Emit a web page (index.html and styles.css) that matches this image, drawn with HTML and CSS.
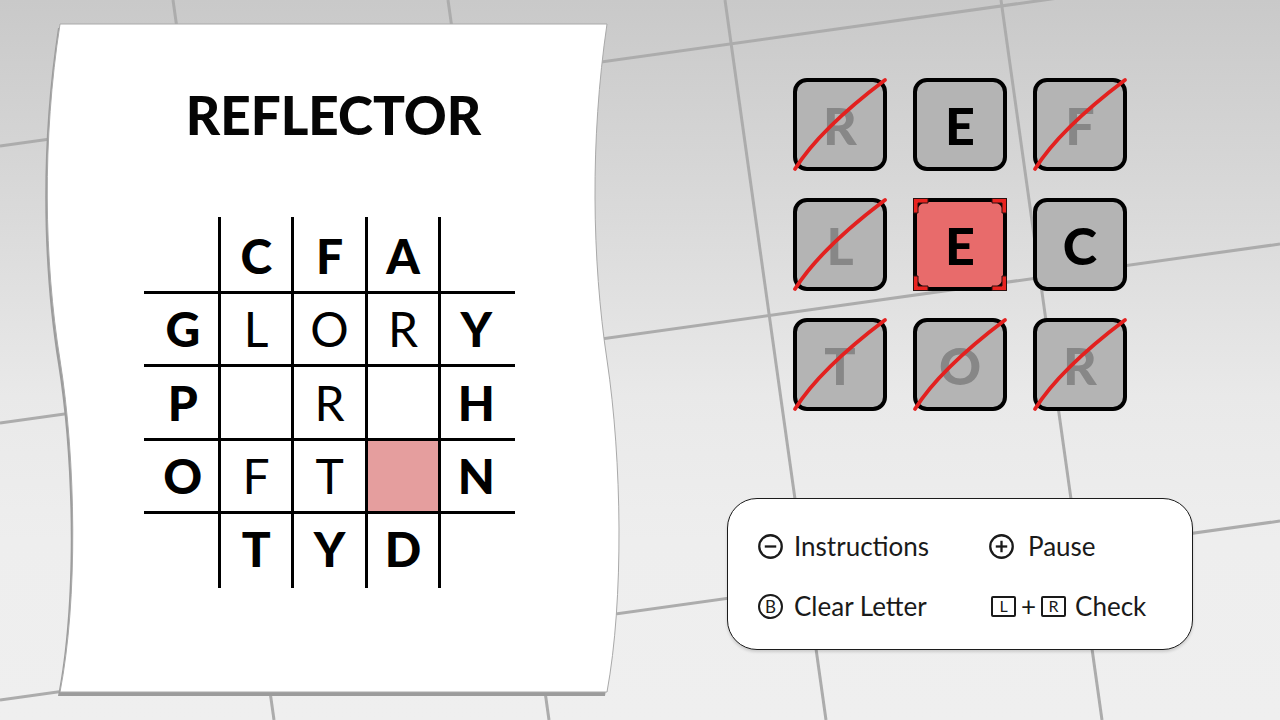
FILE: index.html
```html
<!DOCTYPE html>
<html lang="en">
<head>
<meta charset="utf-8">
<title>Reflector</title>
<link rel="stylesheet" href="styles.css">
</head>
<body>
<div class="scene">
  <svg class="floor" width="1280" height="720" viewBox="0 0 1280 720" aria-hidden="true">
    <g stroke="#acacac" stroke-width="3" fill="none">
      <line x1="0" y1="146" x2="1280" y2="-33"/>
      <line x1="0" y1="423" x2="1280" y2="244"/>
      <line x1="0" y1="700" x2="1280" y2="521"/>
      <line x1="173" y1="0" x2="274" y2="720"/>
      <line x1="448" y1="0" x2="549" y2="720"/>
      <line x1="725" y1="0" x2="826" y2="720"/>
      <line x1="1001" y1="0" x2="1102" y2="720"/>
    </g>
  </svg>

  <section class="paper-side">
    <div class="paper">
      <svg class="paper-shape" width="640" height="720" viewBox="0 0 640 720" aria-hidden="true">
        <path transform="translate(-2,4)" fill="#9c9c9c" d="M60,24 C42,140 44,260 60,360 C76,460 78,600 60,692 L607,692 C624,600 622,460 607,360 C592,260 590,140 607,24 Z"/>
        <path fill="#ffffff" stroke="#a9a9a9" stroke-width="1" d="M60,24 C42,140 44,260 60,360 C76,460 78,600 60,692 L607,692 C624,600 622,460 607,360 C592,260 590,140 607,24 Z"/>
      </svg>
      <h1 class="title">REFLECTOR</h1>
      <div class="puzzle">
        <div class="cell"></div><div class="cell">C</div><div class="cell">F</div><div class="cell">A</div><div class="cell"></div>
        <div class="cell">G</div><div class="cell lt">L</div><div class="cell lt">O</div><div class="cell lt">R</div><div class="cell">Y</div>
        <div class="cell">P</div><div class="cell"></div><div class="cell lt">R</div><div class="cell"></div><div class="cell">H</div>
        <div class="cell">O</div><div class="cell lt">F</div><div class="cell lt">T</div><div class="cell hl"></div><div class="cell">N</div>
        <div class="cell"></div><div class="cell">T</div><div class="cell">Y</div><div class="cell">D</div><div class="cell"></div>
      </div>
    </div>
  </section>

  <section class="play-side">
    <div class="tiles">
      <div class="tile used">R<svg class="strike" viewBox="0 0 94 93"><path d="M2,91 Q27,51 92,2"/></svg></div>
      <div class="tile">E</div>
      <div class="tile used">F<svg class="strike" viewBox="0 0 94 93"><path d="M2,91 Q27,51 92,2"/></svg></div>
      <div class="tile used">L<svg class="strike" viewBox="0 0 94 93"><path d="M2,91 Q27,51 92,2"/></svg></div>
      <div class="tile sel">E<svg class="brackets" viewBox="0 0 94 93">
          <path class="corners" fill-rule="evenodd" d="M0,0H94V93H0Z M14,0H80A14,14 0 0 1 94,14V79A14,14 0 0 1 80,93H14A14,14 0 0 1 0,79V14A14,14 0 0 1 14,0Z"/>
          <path class="br" d="M0.5,0.5H15V5H5V15H0.5Z"/>
          <path class="br" d="M93.5,0.5H79V5H89V15H93.5Z"/>
          <path class="br" d="M0.5,92.5H15V88H5V78H0.5Z"/>
          <path class="br" d="M93.5,92.5H79V88H89V78H93.5Z"/>
        </svg></div>
      <div class="tile">C</div>
      <div class="tile used">T<svg class="strike" viewBox="0 0 94 93"><path d="M2,91 Q27,51 92,2"/></svg></div>
      <div class="tile used">O<svg class="strike" viewBox="0 0 94 93"><path d="M2,91 Q27,51 92,2"/></svg></div>
      <div class="tile used">R<svg class="strike" viewBox="0 0 94 93"><path d="M2,91 Q27,51 92,2"/></svg></div>
    </div>

    <div class="controls">
      <div class="ctl">
        <svg class="ico" viewBox="0 0 24 24"><circle cx="12" cy="12" r="10.8"/><line x1="6.5" y1="12" x2="17.5" y2="12"/></svg>
        <span>Instructions</span>
      </div>
      <div class="ctl">
        <svg class="ico ico-wide" viewBox="0 0 24 24"><circle cx="12" cy="12" r="10.8"/><line x1="6.5" y1="12" x2="17.5" y2="12"/><line x1="12" y1="6.5" x2="12" y2="17.5"/></svg>
        <span>Pause</span>
      </div>
      <div class="ctl">
        <span class="btn-round">B</span>
        <span>Clear Letter</span>
      </div>
      <div class="ctl">
        <span class="btn-sq">L</span>
        <span class="plus">+</span>
        <span class="btn-sq">R</span>
        <span class="check">Check</span>
      </div>
    </div>
  </section>
</div>
</body>
</html>
```

FILE: styles.css
```css
html, body {
  margin: 0;
  padding: 0;
}

body {
  font-family: "Lato", "Noto Sans", "Liberation Sans", sans-serif;
  color: #000;
}

.scene {
  position: relative;
  width: 1280px;
  height: 720px;
  overflow: hidden;
  display: flex;
  background: linear-gradient(to bottom, #c9c9c9 0%, #dadada 30%, #e9e9e9 55%, #eeeeee 75%, #efefef 100%);
}

.floor {
  position: absolute;
  left: 0;
  top: 0;
  z-index: 0;
}

/* ---------- paper ---------- */
.paper-side {
  position: relative;
  z-index: 1;
  width: 640px;
  flex: none;
}

.paper {
  position: relative;
  z-index: 0;
  margin: 24px 0 0 60px;
  width: 547px;
  height: 668px;
  display: flex;
  flex-direction: column;
  align-items: center;
}

.paper-shape {
  position: absolute;
  left: -60px;
  top: -24px;
  z-index: -1;
}

.title {
  margin: 64px 0 0 0;
  font-size: 53px;
  line-height: 53px;
  font-weight: 900;
  letter-spacing: 0;
  color: #050505;
}

.puzzle {
  align-self: flex-start;
  margin: 76px 0 0 84px;
  display: grid;
  grid-template-columns: 74px repeat(3, 70.4px) 74px;
  grid-template-rows: 74px repeat(3, 70.4px) 74px;
  gap: 3px;
  background: #000;
}

.cell {
  background: #fff;
  display: flex;
  align-items: center;
  justify-content: center;
  font-size: 48px;
  font-weight: 900;
  line-height: 1;
}

.cell:nth-child(5n+1) { padding-left: 3.6px; }
.cell:nth-child(5n) { padding-right: 3.6px; }
.cell:nth-child(-n+5) { padding-top: 3.6px; }
.cell:nth-child(n+21) { padding-bottom: 3.6px; }

.cell.lt {
  font-weight: 400;
}

.cell.hl {
  background: #e59e9e;
}

/* ---------- right side ---------- */
.play-side {
  position: relative;
  z-index: 1;
  flex: 1;
  display: flex;
  flex-direction: column;
  align-items: center;
}

.tiles {
  margin-top: 78px;
  display: grid;
  grid-template-columns: repeat(3, 94px);
  grid-auto-rows: 93px;
  column-gap: 26px;
  row-gap: 27px;
}

.tile {
  position: relative;
  box-sizing: border-box;
  border: 4px solid #000;
  border-radius: 14px;
  background: #b4b4b4;
  display: flex;
  align-items: center;
  justify-content: center;
  font-size: 52px;
  font-weight: 900;
  line-height: 1;
  color: #000;
}

.tile.used {
  color: #878787;
}

.tile.sel {
  background: #e86b6b;
}

.strike,
.brackets {
  position: absolute;
  left: -4px;
  top: -4px;
  width: 94px;
  height: 93px;
  overflow: visible;
}

.strike path {
  fill: none;
  stroke: #e3211f;
  stroke-width: 3.8;
  stroke-linecap: round;
}

.brackets .corners {
  fill: #111;
}

.brackets .br {
  fill: #e8231f;
  stroke: #2a1010;
  stroke-width: 1;
}

/* ---------- controls ---------- */
.controls {
  margin-top: 87px;
  box-sizing: border-box;
  width: 466px;
  height: 152px;
  padding: 32px 0 0 30px;
  background: #fff;
  border: 1.5px solid #1c1c1c;
  border-radius: 30px;
  box-shadow: 0 2px 3px rgba(0, 0, 0, 0.15);
  display: grid;
  grid-template-columns: 231px auto;
  grid-auto-rows: 30px;
  row-gap: 30px;
}

.ctl {
  display: flex;
  align-items: center;
  font-size: 26px;
  font-weight: 400;
  color: #1a1a1a;
  white-space: nowrap;
}

.ico {
  width: 25px;
  height: 25px;
  flex: none;
  margin-right: 11px;
  fill: none;
  stroke: #1a1a1a;
  stroke-width: 2.2;
}

.ico-wide {
  margin-right: 14px;
}

.btn-round {
  box-sizing: border-box;
  width: 25px;
  height: 25px;
  flex: none;
  margin-right: 11px;
  border: 2px solid #1a1a1a;
  border-radius: 50%;
  display: flex;
  align-items: center;
  justify-content: center;
  font-size: 17px;
  line-height: 1;
}

.btn-sq {
  box-sizing: border-box;
  width: 25px;
  height: 21px;
  flex: none;
  border: 2px solid #1a1a1a;
  border-radius: 2px;
  display: flex;
  align-items: center;
  justify-content: center;
  font-size: 16px;
  line-height: 1;
}

.btn-sq:first-child {
  margin-left: 2px;
}

.plus {
  margin: 0 5px;
}

.check {
  margin-left: 9px;
}
```
